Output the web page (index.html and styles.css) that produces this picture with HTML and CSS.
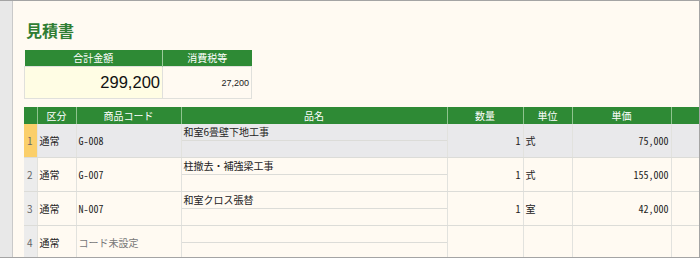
FILE: index.html
```html
<!DOCTYPE html>
<html lang="ja">
<head>
<meta charset="utf-8">
<link rel="stylesheet" href="styles.css">
</head>
<body>
<div class="frame">
  <div class="side"></div>
  <div class="content">
    <h1 class="title">見積書</h1>
    <table class="summary">
      <colgroup><col class="s1"><col class="s2"></colgroup>
      <tr class="shead"><th>合計金額</th><th>消費税等</th></tr>
      <tr class="sval"><td class="total">299,200</td><td class="tax">27,200</td></tr>
    </table>
    <table class="grid">
      <colgroup>
        <col class="c-num"><col class="c-kbn"><col class="c-code"><col class="c-name">
        <col class="c-qty"><col class="c-unit"><col class="c-price"><col class="c-rest">
      </colgroup>
      <tr class="ghead">
        <th></th><th>区分</th><th>商品コード</th><th>品名</th><th>数量</th><th>単位</th><th>単価</th><th></th>
      </tr>
      <tr class="sel">
        <td class="num">1</td><td class="txt">通常</td><td class="code">G-008</td>
        <td class="name"><div class="sub first">和室6畳壁下地工事</div><div class="sub"></div></td>
        <td class="qty">1</td><td class="txt">式</td><td class="price">75,000</td><td></td>
      </tr>
      <tr>
        <td class="num">2</td><td class="txt">通常</td><td class="code">G-007</td>
        <td class="name"><div class="sub first">柱撤去・補強梁工事</div><div class="sub"></div></td>
        <td class="qty">1</td><td class="txt">式</td><td class="price">155,000</td><td></td>
      </tr>
      <tr>
        <td class="num">3</td><td class="txt">通常</td><td class="code">N-007</td>
        <td class="name"><div class="sub first">和室クロス張替</div><div class="sub"></div></td>
        <td class="qty">1</td><td class="txt">室</td><td class="price">42,000</td><td></td>
      </tr>
      <tr>
        <td class="num">4</td><td class="txt">通常</td><td class="code unset">コード未設定</td>
        <td class="name"><div class="sub first"></div><div class="sub"></div></td>
        <td class="qty"></td><td class="txt"></td><td class="price"></td><td></td>
      </tr>
    </table>
  </div>
</div>
</body>
</html>
```
FILE: styles.css
```css
html, body {
  margin: 0;
  padding: 0;
  background: #fffaf2;
}
.frame {
  width: 700px;
  height: 258px;
  box-sizing: border-box;
  border-top: 1px solid #a4a4a4;
  border-right: 1px solid #a4a4a4;
  border-bottom: 1px solid #a4a4a4;
  display: flex;
  overflow: hidden;
  font-family: "Noto Sans CJK JP", sans-serif;
  color: #222;
}
.side {
  width: 12px;
  flex: none;
  background: #e8e8e8;
  border-right: 1px solid #c9c9c9;
}
.content {
  flex: 1;
  background: #fffaf2;
  padding-left: 11px;
  min-width: 0;
}
.title {
  margin: 0;
  padding-top: 19px;
  height: 30px;
  box-sizing: border-box;
  font-size: 16px;
  line-height: 20px;
  font-weight: bold;
  color: #2f7d33;
  padding-left: 2px;
}
.summary {
  border-collapse: collapse;
  table-layout: fixed;
  margin-top: 19px;
  width: 227px;
}
.s1 { width: 138px; }
.s2 { width: 89px; }
.shead th {
  background: #2e8a35;
  color: #fff;
  font-weight: normal;
  font-size: 10px;
  height: 16px;
  line-height: 16px;
  padding: 0;
  border-right: 1px solid #9ccc9c;
}
.shead th:last-child { border-right: none; }
.sval td {
  height: 31px;
  padding: 0 2px 0 0;
  border: 1px solid #e0e0dc;
  text-align: right;
  vertical-align: middle;
}
.total {
  background: #fffde4;
  font-family: "Liberation Sans", Arial, sans-serif;
  font-size: 16.5px;
  color: #111;
}
.tax {
  background: #fffaf2;
  font-family: "Liberation Sans", Arial, sans-serif;
  font-size: 9px;
  color: #222;
}
.grid {
  border-collapse: collapse;
  table-layout: fixed;
  width: 675px;
  margin-top: 8px;
  font-size: 10px;
}
.c-num { width: 13px; }
.c-kbn { width: 39px; }
.c-code { width: 105px; }
.c-name { width: 266px; }
.c-qty { width: 76px; }
.c-unit { width: 49px; }
.c-price { width: 99px; }
.c-rest { width: 28px; }
.ghead th {
  background: #2e8a35;
  color: #fff;
  font-weight: normal;
  font-size: 10px;
  height: 17px;
  line-height: 16px;
  padding: 0;
  border-right: 1px solid #8fc48f;
}
.grid td {
  height: 33px;
  padding: 0;
  border-right: 1px solid #e2e2de;
  border-bottom: 1px solid #dcdcd8;
  vertical-align: middle;
  white-space: nowrap;
  overflow: hidden;
}
.sel td { background: #e9e9eb; }
.grid td.num {
  background: #ececec;
  color: #666;
  text-align: center;
  padding-right: 1px;
}
.sel td.num { background: #fbcf6a; }
.txt { padding-left: 2px !important; }
.code, .price, .qty {
  font-family: "Noto Sans Mono CJK JP", "Liberation Mono", monospace;
  font-size: 10px;
}
.code { padding-left: 2px !important; }
.unset {
  font-family: "Noto Sans CJK JP", sans-serif;
  color: #777;
}
.qty, .price { text-align: right; padding-right: 2px !important; }
.grid td.name { vertical-align: top; }
.sub {
  height: 16px;
  line-height: 16px;
  padding-left: 2px;
}
.sub.first { border-bottom: 1px solid #dcdcd8; }
```
